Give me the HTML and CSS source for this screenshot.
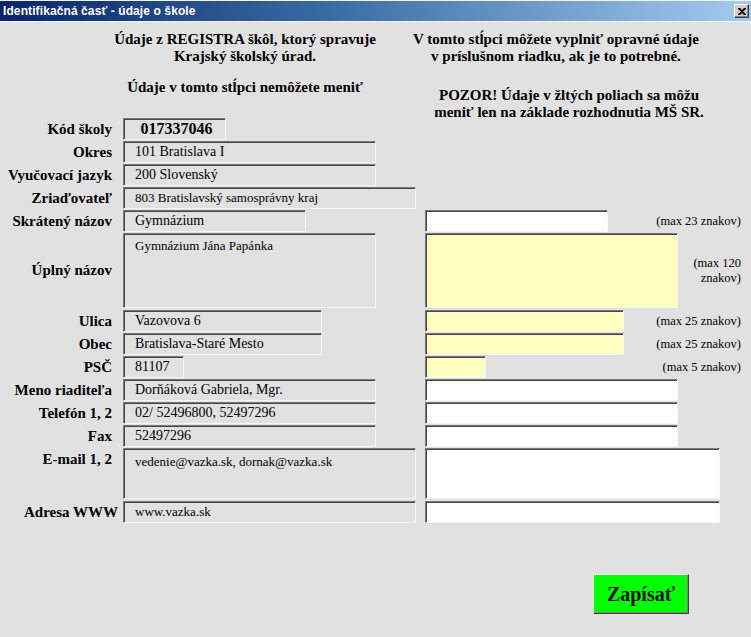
FILE: index.html
```html
<!DOCTYPE html>
<html lang="sk">
<head>
<meta charset="utf-8">
<title>Identifikačná časť - údaje o škole</title>
<link rel="stylesheet" href="styles.css">
</head>
<body>
<div class="window">
  <div class="titlebar">
    <span class="title">Identifikačná časť - údaje o škole</span>
    <span class="close"><svg width="8" height="7" viewBox="0 0 8 7"><path d="M0 0h2l2 2 2-2h2v1L5 3.5 8 6v1H6L4 5 2 7H0V6l3-2.5L0 1z" fill="#000"/></svg></span>
  </div>
  <div class="content">
    <div class="header">
      <div class="hleft">
        <p>Údaje z REGISTRA škôl, ktorý spravuje<br>Krajský školský úrad.</p>
        <p class="second">Údaje v tomto stĺpci nemôžete meniť</p>
      </div>
      <div class="hright">
        <p>V tomto stĺpci môžete vyplniť opravné údaje<br>v príslušnom riadku, ak je to potrebné.</p>
        <p class="pozor">POZOR! Údaje v žltých poliach sa môžu<br>meniť len na základe rozhodnutia MŠ SR.</p>
      </div>
    </div>

    <div class="form">
      <div class="row">
        <div class="label">Kód školy</div>
        <div class="lcell"><div class="fld w103 kod">017337046</div></div>
        <div class="rcell"></div>
      </div>
      <div class="row">
        <div class="label">Okres</div>
        <div class="lcell"><div class="fld w253">101 Bratislava I</div></div>
        <div class="rcell"></div>
      </div>
      <div class="row">
        <div class="label">Vyučovací jazyk</div>
        <div class="lcell"><div class="fld w253">200 Slovenský</div></div>
        <div class="rcell"></div>
      </div>
      <div class="row">
        <div class="label">Zriaďovateľ</div>
        <div class="lcell"><div class="fld w293 small">803 Bratislavský samosprávny kraj</div></div>
        <div class="rcell"></div>
      </div>
      <div class="row">
        <div class="label">Skrátený názov</div>
        <div class="lcell"><div class="fld w183">Gymnázium</div></div>
        <div class="rcell"><div class="fld w183 edit"></div><span class="note">(max 23 znakov)</span></div>
      </div>
      <div class="row tall">
        <div class="label">Úplný názov</div>
        <div class="lcell"><div class="fld w253 area small">Gymnázium Jána Papánka</div></div>
        <div class="rcell"><div class="fld w253 area yellow"></div><span class="note">(max 120 znakov)</span></div>
      </div>
      <div class="row">
        <div class="label">Ulica</div>
        <div class="lcell"><div class="fld w199">Vazovova 6</div></div>
        <div class="rcell"><div class="fld w199 yellow"></div><span class="note">(max 25 znakov)</span></div>
      </div>
      <div class="row">
        <div class="label">Obec</div>
        <div class="lcell"><div class="fld w199">Bratislava-Staré Mesto</div></div>
        <div class="rcell"><div class="fld w199 yellow"></div><span class="note">(max 25 znakov)</span></div>
      </div>
      <div class="row">
        <div class="label">PSČ</div>
        <div class="lcell"><div class="fld w61">81107</div></div>
        <div class="rcell"><div class="fld w61 yellow"></div><span class="note">(max 5 znakov)</span></div>
      </div>
      <div class="row">
        <div class="label">Meno riaditeľa</div>
        <div class="lcell"><div class="fld w253">Dorňáková Gabriela, Mgr.</div></div>
        <div class="rcell"><div class="fld w253 edit"></div></div>
      </div>
      <div class="row">
        <div class="label">Telefón 1, 2</div>
        <div class="lcell"><div class="fld w253">02/ 52496800, 52497296</div></div>
        <div class="rcell"><div class="fld w253 edit"></div></div>
      </div>
      <div class="row">
        <div class="label">Fax</div>
        <div class="lcell"><div class="fld w253">52497296</div></div>
        <div class="rcell"><div class="fld w253 edit"></div></div>
      </div>
      <div class="row tall">
        <div class="label top">E-mail 1, 2</div>
        <div class="lcell"><div class="fld w293 mail small">vedenie@vazka.sk, dornak@vazka.sk</div></div>
        <div class="rcell"><div class="fld w295 mail edit"></div></div>
      </div>
      <div class="row">
        <div class="label wide">Adresa WWW</div>
        <div class="lcell"><div class="fld w293 small">www.vazka.sk</div></div>
        <div class="rcell"><div class="fld w295 edit"></div></div>
      </div>
    </div>

    <div class="actions">
      <button class="save" type="button">Zapísať</button>
    </div>
  </div>
</div>
</body>
</html>
```

FILE: styles.css
```css
* { box-sizing: border-box; }

html, body {
  margin: 0;
  padding: 0;
  background: #e1e1e1;
}

.window {
  width: 751px;
  height: 637px;
  background: #e1e1e1;
  font-family: "Liberation Serif", "Times New Roman", serif;
  color: #000;
  overflow: hidden;
}

.titlebar {
  height: 22px;
  border-top: 1px solid #f4f4f4;
  border-bottom: 1px solid #f4f4f4;
  background: linear-gradient(to right, #0a246a 0%, #3a6ea5 45%, #a6caf0 100%);
  display: flex;
  align-items: center;
  justify-content: space-between;
  padding: 0 2px 0 3px;
}

.title {
  font-family: "Liberation Sans", Arial, sans-serif;
  font-weight: bold;
  font-size: 12px;
  color: #fff;
  letter-spacing: 0.1px;
}

.close {
  width: 15px;
  height: 14px;
  background: #d4d0c8;
  border: 1px solid;
  border-color: #fff #404040 #404040 #fff;
  box-shadow: inset -1px -1px 0 #808080;
  display: flex;
  align-items: center;
  justify-content: center;
}

.header {
  display: flex;
  height: 96px;
  font-weight: bold;
  font-size: 15px;
  line-height: 17px;
}

.header p { margin: 0; }

.hleft {
  width: 290px;
  margin-left: 100px;
  text-align: center;
  padding-top: 9px;
  white-space: nowrap;
}

.hleft .second { margin-top: 14px; }

.hright {
  width: 312px;
  margin-left: 10px;
  text-align: center;
  padding-top: 9px;
  white-space: nowrap;
}

.hright .pozor {
  margin-top: 22px;
  padding-left: 26px;
}

.form {
  display: flex;
  flex-direction: column;
  gap: 1px;
}

.row {
  display: flex;
  align-items: center;
}

.row.tall { margin-bottom: 1px; }

.label {
  width: 112px;
  text-align: right;
  font-weight: bold;
  font-size: 15px;
  line-height: 17px;
  white-space: nowrap;
}

.label.top {
  align-self: flex-start;
  line-height: 22px;
}

.label.wide { margin-right: -6px; width: 118px; }

.lcell {
  width: 302px;
  margin-left: 11px;
  flex: none;
}

.rcell {
  display: flex;
  align-items: center;
  width: 316px;
  margin-left: 0;
}

.fld {
  height: 22px;
  border: 1px solid;
  border-color: #7a7a7a #f6f6f6 #f6f6f6 #7a7a7a;
  box-shadow: inset 1px 1px 0 #454545;
  background: #e1e1e1;
  font-size: 14px;
  line-height: 19px;
  padding-left: 11px;
  white-space: nowrap;
  overflow: hidden;
}

.fld.small { font-size: 13px; }

.fld.kod {
  font-weight: bold;
  font-size: 16px;
  text-align: center;
  padding-left: 4px;
}

.fld.area {
  height: 75px;
  line-height: 15px;
  padding-top: 4px;
}

.fld.mail {
  height: 51px;
  line-height: 15px;
  padding-top: 5px;
}

.fld.edit { background: #fff; }
.fld.yellow { background: #ffffc0; }

.w61 { width: 61px; }
.w103 { width: 103px; }
.w183 { width: 183px; }
.w199 { width: 199px; }
.w253 { width: 253px; }
.w293 { width: 293px; }
.w295 { width: 295px; }

.note {
  flex: 1;
  text-align: right;
  font-size: 12.5px;
  line-height: 15px;
  padding-left: 4px;
}

.actions {
  display: flex;
  justify-content: flex-end;
  padding-right: 62px;
  margin-top: 51px;
}

.save {
  width: 96px;
  height: 40px;
  background: #00ff00;
  border: 1px solid;
  border-color: #f4f4f4 #404040 #404040 #f4f4f4;
  box-shadow: inset -1px -1px 0 #808080;
  font-family: "Liberation Serif", "Times New Roman", serif;
  font-weight: bold;
  font-size: 20px;
  color: #111;
  padding: 0;
}
```
